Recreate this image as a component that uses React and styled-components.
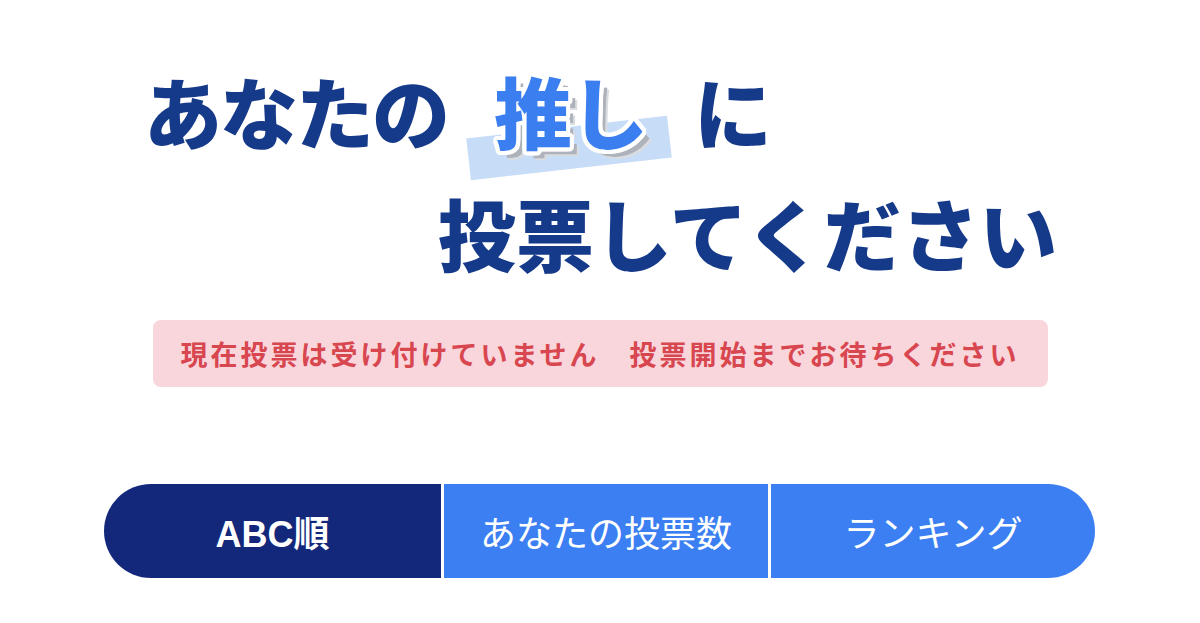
import React from 'react';
import styled, { createGlobalStyle } from 'styled-components';

const GlobalStyle = createGlobalStyle`
  body {
    margin: 0;
    background: #ffffff;
    font-family: 'Noto Sans CJK JP', 'Noto Sans', sans-serif;
  }
`;

const Page = styled.div`
  width: 1200px;
  height: 623px;
  overflow: hidden;
  display: flex;
  flex-direction: column;
`;

const Heading = styled.h1`
  margin: 0;
  padding-top: 71px;
  font-size: 78px;
  font-weight: 900;
  line-height: 1;
  color: #163a8a;
  display: flex;
  flex-direction: column;
  gap: 44px;
`;

const HeadingLine = styled.div`
  display: flex;
  align-items: center;
  padding-left: ${p => p.$indent}px;
  letter-spacing: ${p => p.$tracking}px;
`;

// white outline ring, then a grey drop under the whole word
const outline = [
  [4, 0], [-4, 0], [0, 4], [0, -4],
  [3, 3], [-3, 3], [3, -3], [-3, -3],
  [2, 4], [-2, 4], [2, -4], [-2, -4],
  [4, 2], [-4, 2], [4, -2], [-4, -2],
]
  .map(([x, y]) => `${x}px ${y}px 0 #ffffff`)
  .join(', ');

const Accent = styled.span`
  position: relative;
  margin: 0 48px 0 46px;
  color: #3a7ef0;
  text-shadow: ${outline}, 7px 7px 0 #aeb3bb, 9px 9px 0 #d9dce1;

  &::before {
    content: '';
    position: absolute;
    left: -26px;
    right: -24px;
    top: 56px;
    height: 42px;
    background: #c6dcf7;
    transform: rotate(-6.5deg);
    z-index: -1;
  }
`;

const AccentWrap = styled.span`
  position: relative;
  z-index: 0;
  display: inline-flex;
`;

const Notice = styled.div`
  margin: 49px auto 0;
  width: 895px;
  height: 67px;
  box-sizing: border-box;
  border-radius: 8px;
  background: #f8d6dc;
  color: #d8464f;
  font-size: 27px;
  font-weight: 700;
  letter-spacing: 3px;
  display: flex;
  align-items: center;
  justify-content: center;
`;

const Tabs = styled.div`
  margin: 97px 0 0 104px;
  width: 991px;
  height: 94px;
  display: grid;
  grid-template-columns: 337px 324px 324px;
  gap: 3px;
  border-radius: 47px;
  overflow: hidden;
`;

const Tab = styled.div`
  display: flex;
  align-items: center;
  justify-content: center;
  background: ${p => (p.$active ? '#13287a' : '#3b7ff2')};
  color: #ffffff;
  font-size: 36px;
  font-weight: ${p => (p.$active ? 700 : 400)};
  font-family: ${p =>
    p.$active
      ? "'Liberation Sans', 'Noto Sans CJK JP', sans-serif"
      : "'Noto Sans CJK JP', sans-serif"};
`;

export default function App() {
  return (
    <Page>
      <GlobalStyle />
      <Heading>
        <HeadingLine $indent={144} $tracking={-2}>
          あなたの
          <AccentWrap>
            <Accent>推し</Accent>
          </AccentWrap>
          に
        </HeadingLine>
        <HeadingLine $indent={438} $tracking={0}>
          投票してください
        </HeadingLine>
      </Heading>
      <Notice>現在投票は受け付けていません　投票開始までお待ちください</Notice>
      <Tabs>
        <Tab $active>ABC順</Tab>
        <Tab>あなたの投票数</Tab>
        <Tab>ランキング</Tab>
      </Tabs>
    </Page>
  );
}
